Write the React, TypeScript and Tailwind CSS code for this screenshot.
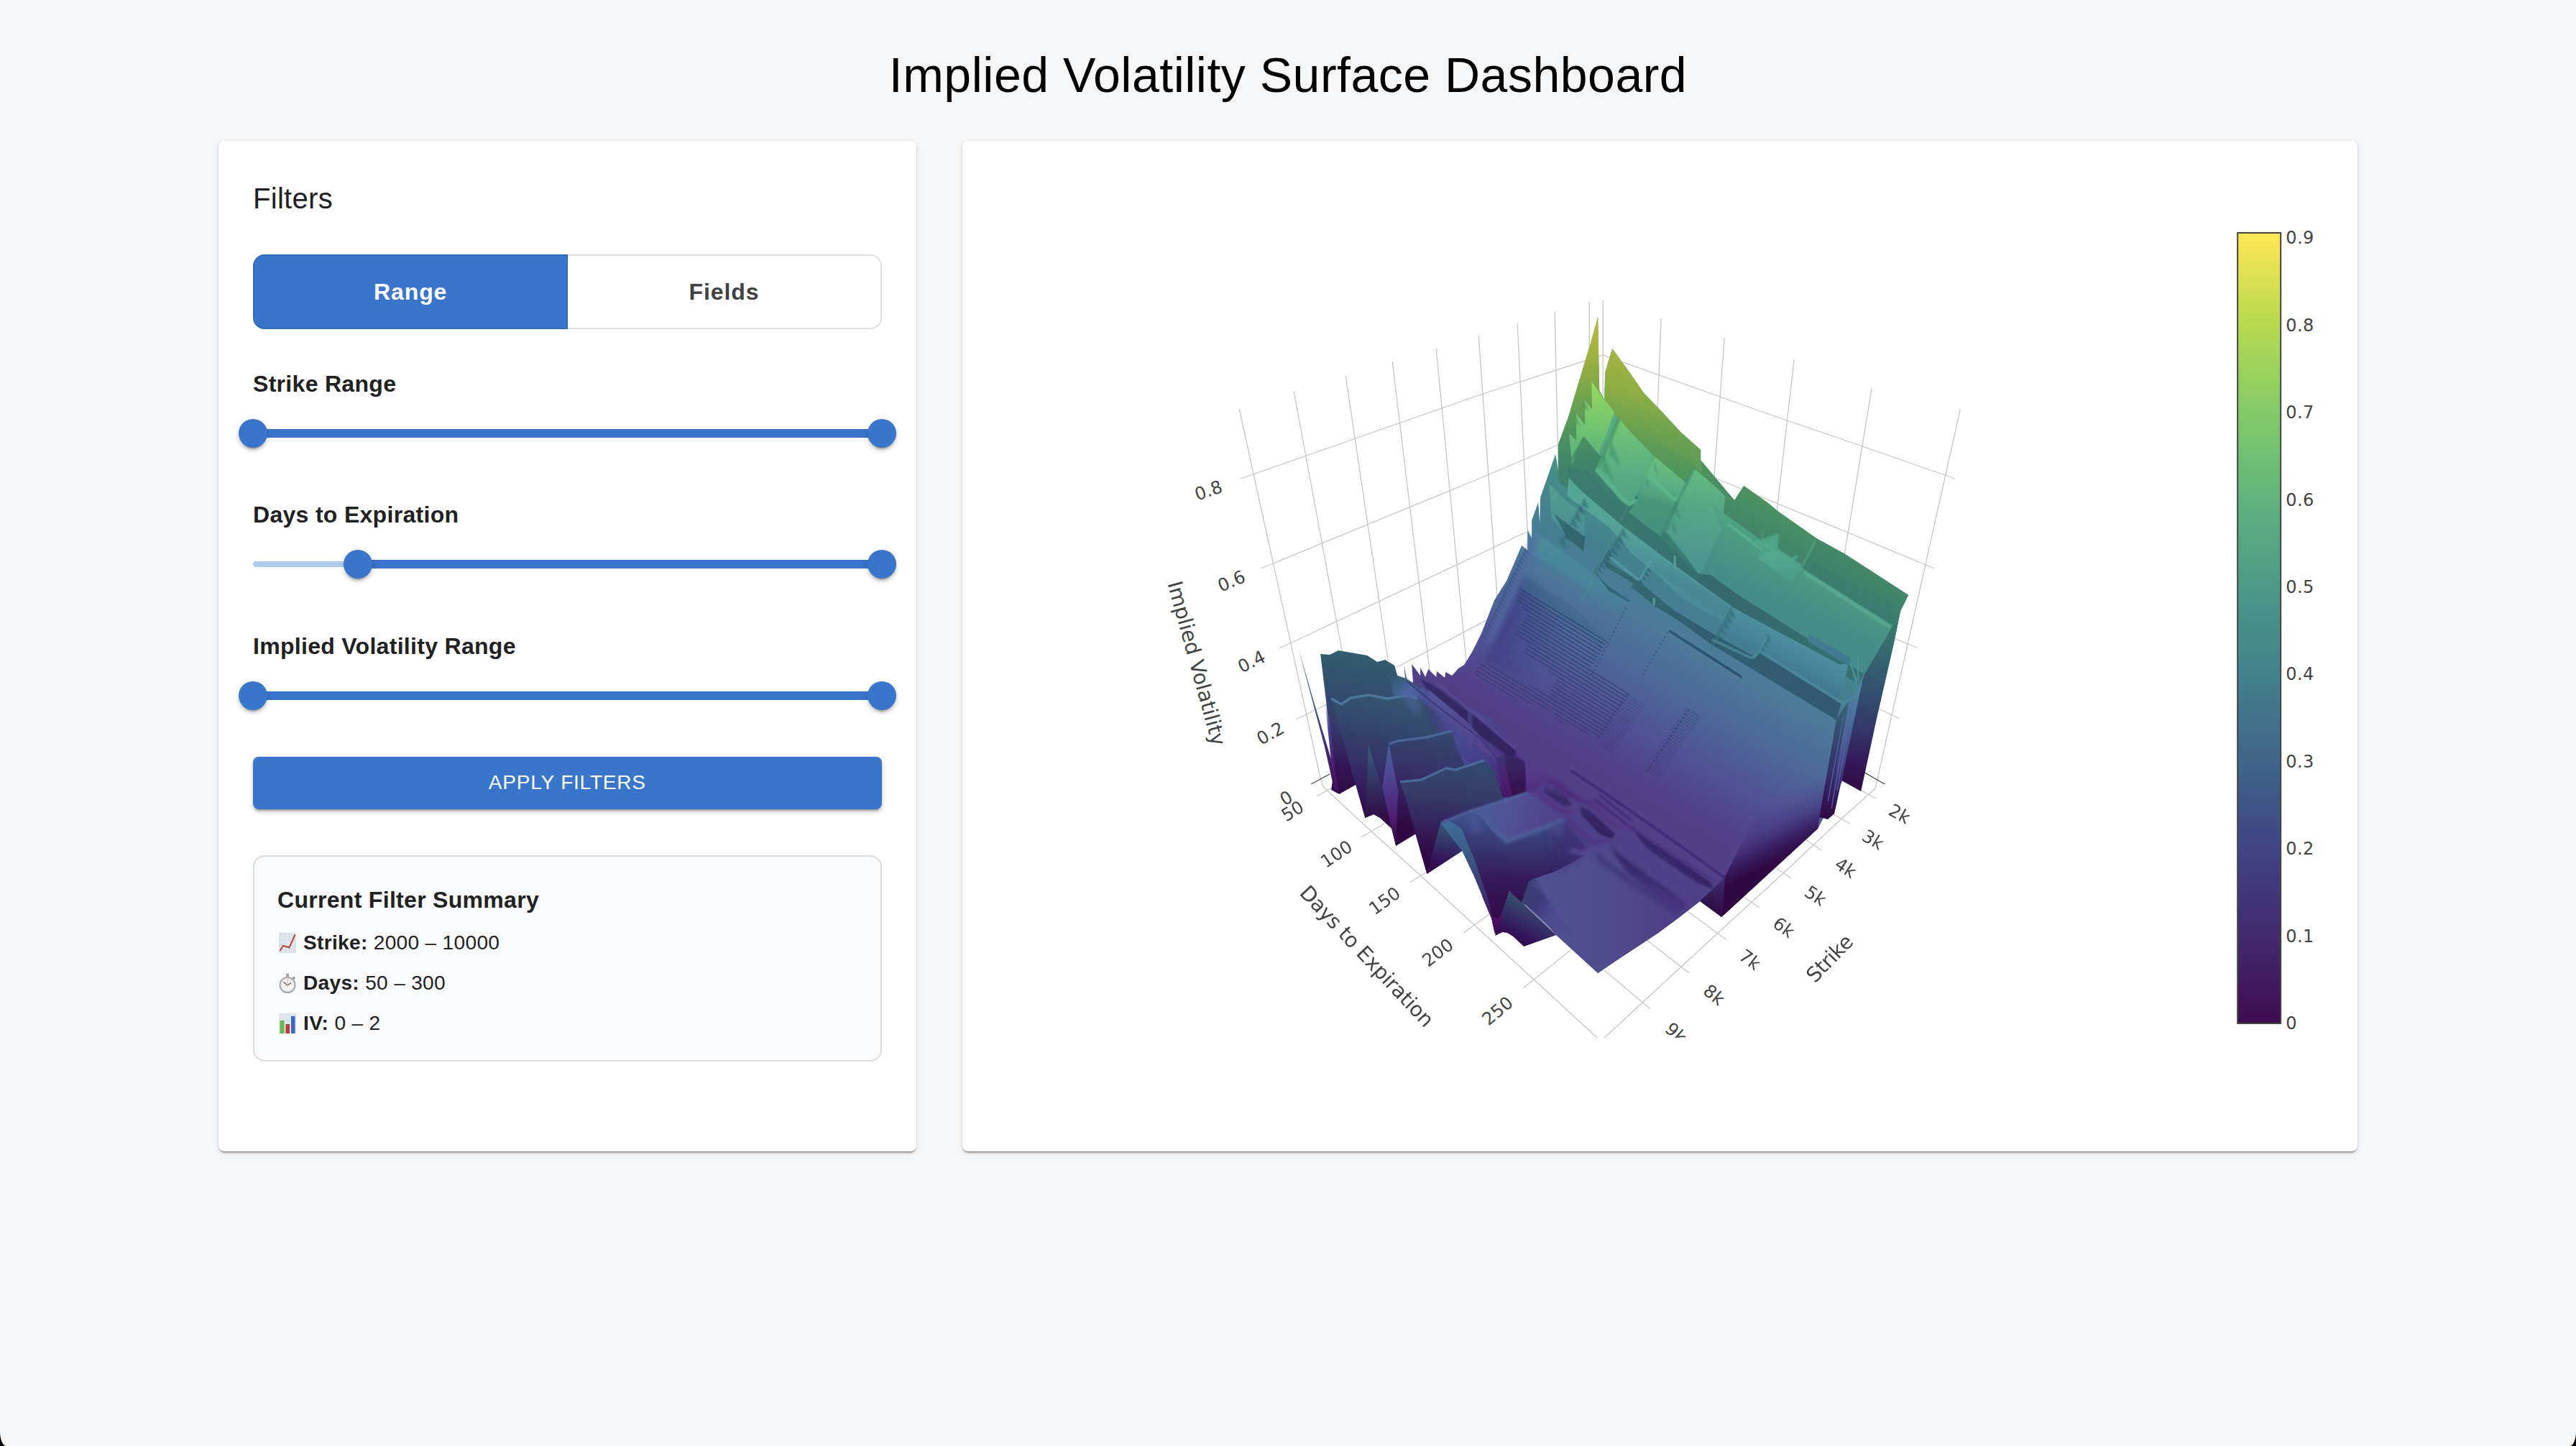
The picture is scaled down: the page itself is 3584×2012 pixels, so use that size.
import React from "react";

type Stop = [number, string, number?];
type Face = { p: string; g: [number, number, number, number]; s: Stop[]; b?: number };

const OUTLINE =
  "2223,441 2225,543 2232,556 2233,518 2243,485 2267,518 2287,547 2313,574 2338,601 2366,626 2366,657 2413,696 2426,676 2460,700 2473,711 2527,749 2567,771 2655,828 2644,850 2635,894 2613,990 2529,1153 2395,1276 2365,1254 2338,1275 2307,1298 2248,1337 2223,1354 2165,1301 2120,1250 2063,1200 2000,1100 1975,1000 1955,944 1953,925 1957,945 1966,952 1964,924 1976,940 1976,929 1983,942 1987,931 1998,942 1999,934 2010,943 2011,935 2020,940 2029,930 2037,925 2048,907 2061,881 2079,835 2096,808 2117,759 2125,766 2125,737 2131,749 2131,724 2140,699 2142,727 2143,692 2164,632 2168,655 2168,618 2182,580 2193,543 2203,510 2213,477";

/* Main sheet shading, running from the near wing up to the low strikes. */
const SHEET: Stop[] = [
  [0, "#4f428a"], [0.08, "#523f86"], [0.2, "#534189"], [0.3, "#504f92"], [0.38, "#4f5c97"],
  [0.48, "#4d6b99"], [0.6, "#4c7b9c"], [0.7, "#457f90"], [0.8, "#458a8a"], [0.9, "#4a9a86"], [1, "#57ae82"],
];

const FACES: Face[] = [
  { p: OUTLINE, g: [2200, 1156, 2450, 723], s: SHEET },
  // far ridge, first spike
  { p: "2223,441 2225,543 2232,556 2246,573 2237,598 2224,632 2255,660 2300,720 2366,800 2300,770 2240,730 2168,670 2168,618 2182,580 2193,543 2203,510 2213,477", g: [2190, 441, 2210, 690],
    s: [[0, "#c4b842"], [0.25, "#9cb03f"], [0.42, "#77a54b"], [0.6, "#54985c"], [0.78, "#428768"], [1, "#3a7c70"]] },
  // far ridge, second crest
  { p: "2243,485 2267,518 2287,547 2313,574 2338,601 2366,626 2366,657 2413,696 2413,740 2347,673 2302,638 2250,582 2232,556 2233,518", g: [2262, 490, 2225, 640],
    s: [[0, "#a9b33f"], [0.35, "#8bad44"], [0.65, "#6aa150"], [1, "#4f965c"]] },
  { p: "2250,560 2302,605 2366,657 2413,700 2413,760 2347,690 2302,640 2250,590", g: [2330, 610, 2310, 680],
    s: [[0, "#5d9c54", 0], [0.6, "#4f965d", 0.9], [1, "#44896a"]] },
  { p: "2366,640 2413,696 2426,676 2460,700 2473,711 2527,749 2508,791 2477,771 2380,702 2356,651 2366,657", g: [2450, 690, 2420, 752],
    s: [[0, "#4d925c"], [0.5, "#458a68"], [1, "#3f7f6e"]] },
  { p: "2527,749 2567,771 2655,828 2644,850 2633,872 2508,791", g: [2590, 782, 2566, 828],
    s: [[0, "#448a66"], [0.5, "#41836b"], [1, "#3b7a70"]] },
  // bright stepped slabs behind the first dark trough
  { p: "2214,530 2232,556 2246,573 2237,598 2224,632 2204,608 2193,627 2187,647 2183,603 2193,613 2193,575 2205,592 2205,557 2215,570", g: [2215, 530, 2205, 640],
    s: [[0, "#97d75f"], [0.4, "#7ecb6b"], [1, "#56b27c"]] },
  { p: "2253,583 2273,606 2302,636 2292,657 2282,678 2268,705 2255,697 2219,655 2230,630 2241,605", g: [2262, 585, 2250, 705],
    s: [[0, "#78c573"], [0.45, "#5cb480"], [1, "#4c9f85"]] },
  { p: "2303,636 2347,673 2337,696 2327,718 2310,747 2266,713 2280,690 2291,659", g: [2318, 640, 2295, 740],
    s: [[0, "#6cc07c"], [0.4, "#55ab84"], [0.6, "#489679"], [1, "#46907f"]] },
  { p: "2356,651 2382,673 2400,690 2395,740 2380,795 2363,798 2320,740 2330,715 2341,680", g: [2365, 655, 2345, 795],
    s: [[0, "#62ba7e"], [0.4, "#52a687"], [1, "#499391"]] },
  { p: "2380,701 2477,771 2508,791 2633,870 2593,938 2417,827 2366,798 2395,735", g: [2450, 735, 2410, 820],
    s: [[0, "#4ea683"], [0.35, "#4a9a82"], [1, "#458b8a"]] },
  // teal slabs
  { p: "2183,660 2205,687 2259,733 2328,785 2410,842 2397,863 2370,850 2340,832 2300,795 2270,770 2240,735 2200,705 2180,690", g: [2300, 745, 2275, 800],
    s: [[0, "#54a596"], [0.6, "#4f959b"], [1, "#4b8a99"]] },
  { p: "2155,673 2182,700 2205,715 2203,767 2180,745 2158,720", g: [2180, 680, 2170, 750], s: [[0, "#519f8d"], [1, "#4b8898"]] },
  { p: "2137,740 2147,748 2205,790 2270,840 2240,850 2180,800 2130,770", g: [2200, 760, 2180, 830], s: [[0, "#4b8f9b"], [1, "#4a7b9b"]], b: 2 },
  // dark troughs
  { p: "2183,650 2212,656 2240,690 2266,713 2310,747 2361,798 2380,800 2417,827 2593,938 2587,953 2410,844 2380,823 2328,785 2258,732 2200,683 2178,660", g: [2180, 650, 2590, 945],
    s: [[0, "#3d7d6f"], [0.3, "#39756e"], [0.55, "#35696f"], [1, "#37706f"]] },
  { p: "2263,745 2330,790 2408,846 2400,862 2330,815 2262,760", g: [2300, 765, 2290, 800], s: [[0, "#509a98"], [1, "#4a8896"]] },
  { p: "2587,953 2584,902 2584,960 2573,922 2560,925 2410,845 2397,864 2387,884 2393,880 2560,975 2573,918", g: [2500, 890, 2480, 930],
    s: [[0, "#4f8fa0"], [1, "#427a93"]] },
  { p: "2162,715 2205,747 2203,767 2180,748", g: [2162, 715, 2203, 767], s: [[0, "#36706e"], [1, "#33616f"]] },
  { p: "2235,781 2280,808 2300,826 2330,850 2393,888 2387,884 2440,913 2447,908 2561,979 2555,1002 2380,896 2333,862 2300,842 2277,822 2273,812 2232,788", g: [2235, 781, 2560, 990],
    s: [[0, "#356b70"], [0.4, "#315f70"], [1, "#325a72"]] },
  { p: "2323,876 2423,940 2424,945 2321,879", g: [2323, 876, 2423, 945], s: [[0, "#2f5674"], [1, "#2d5270"]] },
  { p: "2223,802 2237,815 2268,836 2266,838 2238,822", g: [2223, 802, 2268, 836], s: [[0, "#31616f"], [1, "#35697f"]] },
  { p: "2516,882 2525,887 2523,886 2574,915 2573,927 2516,893", g: [2516, 882, 2570, 920], s: [[0, "#447e93"], [1, "#40788f"]] },
  { p: "2452,733 2452,750 2475,742 2473,763 2508,787 2492,809 2447,778", g: [2470, 740, 2480, 812], s: [[0, "#4ca283"], [0.5, "#52a78e"], [1, "#489b88"]], b: 1 },
  // low-strike end wall
  { p: "2655,828 2644,850 2635,894 2613,990 2589,1101 2562,1086 2583,975 2593,940 2633,871", g: [2630, 850, 2590, 1100],
    s: [[0, "#3d806e"], [0.22, "#356a70"], [0.45, "#33506f"], [0.65, "#343a6b"], [0.85, "#35195a"], [1, "#310a42"]] },
  { p: "2585,955 2593,938 2562,1086 2552,1132 2543,1140 2533,1135 2555,1001 2573,973", g: [2575, 955, 2540, 1135],
    s: [[0, "#4d87a0"], [0.3, "#4a6898"], [0.6, "#454387"], [0.85, "#35195a"], [1, "#310a42"]] },
  { p: "2573,973 2560,993 2555,1001 2531,1137 2543,1140 2558,1050", g: [2568, 975, 2540, 1135],
    s: [[0, "#356a78"], [0.3, "#334a6f"], [0.6, "#35336b"], [0.85, "#34175a"], [1, "#310a42"]] },
  // lower fringe
  { p: "2555,1001 2531,1137 2529,1153 2395,1276 2399,1221 2470,1080", g: [2445, 1125, 2480, 1194],
    s: [[0, "#4b4a8d", 0], [0.4, "#45347c", 0.5], [0.75, "#361a5c", 0.92], [1, "#300944"]] },
  { p: "2400,1221 2395,1276 2365,1254", g: [2398, 1221, 2390, 1270], s: [[0, "#3d2f70"], [1, "#300a44"]] },
  // near wing plate
  { p: "2127,1227 2136,1222 2165,1212 2207,1188 2240,1178 2300,1220 2365,1254 2338,1275 2307,1298 2248,1337 2223,1354 2165,1301", g: [2150, 1230, 2330, 1230],
    s: [[0, "#4f508f"], [0.5, "#504c8d"], [1, "#513f87"]] },
  { p: "2238,1178 2258,1192 2341,1253 2346,1262 2338,1270 2310,1250 2265,1215", g: [2300, 1210, 2285, 1240], s: [[0, "#35255e"], [0.55, "#3e2f74"], [1, "#523788"]], b: 2 },
  { p: "2272,1153 2310,1180 2379,1227 2384,1238 2360,1228 2290,1180", g: [2330, 1185, 2315, 1205], s: [[0, "#33225c"], [0.7, "#3a2b6c"], [1, "#4e3a86"]], b: 1 },
  { p: "2198,1122 2212,1128 2247,1160 2242,1167 2225,1160 2200,1134", g: [2220, 1135, 2212, 1155], s: [[0, "#392b68"], [1, "#33205c"]], b: 1 },
  { p: "2148,1094 2158,1090 2182,1112 2187,1121 2175,1122 2148,1102", g: [2165, 1095, 2158, 1120], s: [[0, "#4a3f85"], [0.5, "#382a66"], [1, "#40306f"]], b: 1 },
  // strip of folds beside the front walls
  { p: "1966,952 2075,1000 2109,1047 2121,1060 2125,1103 2081,1112 2064,1057 2020,1017 1975,972", g: [1980, 960, 2110, 1100],
    s: [[0, "#4d5093"], [0.45, "#4c4a90"], [0.75, "#4d3585"], [1, "#3b1358"]] },
  { p: "1976,944 2000,957 2060,1003 2109,1045 2104,1056 2060,1025 1998,970 1984,958", g: [1980, 950, 2105, 1050], s: [[0, "#362c66"], [1, "#35245f"]], b: 1 },
  { p: "1988,960 2040,1003 2081,1050 2082,1062 2030,1015 1985,974", g: [1988, 960, 2080, 1060], s: [[0, "#51559a"], [1, "#543f88"]] },
  { p: "2092,1048 2121,1059 2123,1101 2104,1112 2094,1100", g: [2105, 1050, 2112, 1108], s: [[0, "#392b66"], [1, "#350f4d"]], b: 1 },
  { p: "2081,1055 2092,1105 2099,1112 2104,1112 2092,1050", g: [2088, 1055, 2098, 1110], s: [[0, "#3d3273"], [0.5, "#4a2270"], [1, "#4b1562"]] },
  { p: "2123,1057 2200,1110 2180,1110 2160,1092 2146,1091 2136,1101 2123,1103", g: [2135, 1060, 2145, 1105], s: [[0, "#543f88"], [1, "#502e80"]], b: 1 },
  // front walls, far to near
  { p: "1806,901 1830,984 1856,1070 1868,1098 1856,1098 1843,1040", g: [1810, 905, 1856, 1095], s: [[0, "#3f7388"], [0.35, "#3e5c92"], [0.7, "#3f2c77"], [1, "#430f57"]] },
  { p: "1837,910 1850,911 1862,905 1902,912 1916,921 1927,918 1940,926 1944,940 1955,944 1975,955 1975,1010 1915,1100 1886,1092 1863,1105 1852,1099 1856,1070", g: [1890, 905, 1870, 1105],
    s: [[0, "#335f6f"], [0.3, "#334d6e"], [0.55, "#35386a"], [0.78, "#35185a"], [1, "#300a44"]] },
  { p: "1843,975 1850,1000 1857,1070 1863,1104 1856,1098", g: [1850, 975, 1860, 1100], s: [[0, "#48408c", 0], [0.3, "#4d3f92"], [0.8, "#481b6a"], [1, "#430f57"]] },
  { p: "1934,940 1957,944 1966,953 1985,968 1990,990 1960,975 1938,967", g: [1940, 945, 1975, 980], s: [[0, "#365a78"], [0.5, "#4a68a0"], [1, "#4b4f94"]], b: 1 },
  { p: "1852,972 1866,980 1879,970 1904,966 1930,971 1957,967 1975,972 1995,990 2020,1017 2050,1060 2010,1080 1970,1160 1942,1177 1936,1153 1920,1138 1911,1133 1899,1138 1886,1092", g: [1925, 965, 1890, 1140],
    s: [[0, "#34566f"], [0.3, "#33456d"], [0.55, "#353169"], [0.8, "#34175a"], [1, "#300944"]] },
  { p: "1957,968 1975,972 1997,992 2020,1017 2050,1060 2035,1068 2005,1020 1975,1000", g: [1985, 1010, 2015, 1000], s: [[0, "#35386b", 0], [0.5, "#3f4280", 0.9], [1, "#4a4a92"]], b: 2 },
  { p: "1904,1037 1925,1105 1937,1153 1920,1138 1911,1133 1899,1138", g: [1906, 1037, 1903, 1138], s: [[0, "#356374"], [0.4, "#353c6b"], [1, "#310b46"]] },
  { p: "1932,1034 1940,1060 1945,1100 1942,1177 1936,1153 1923,1096", g: [1932, 1034, 1938, 1170], s: [[0, "#486096"], [0.35, "#4d4590"], [0.75, "#4d1f72"], [1, "#3a0b4c"]] },
  { p: "1932,1034 1943,1031 1984,1026 2020,1018 2028,1040 2039,1070 2010,1110 1970,1150 1942,1177 1945,1100", g: [1985, 1026, 1968, 1150],
    s: [[0, "#34456e"], [0.4, "#363068"], [0.75, "#36185a"], [1, "#300944"]] },
  { p: "2020,1017 2030,1026 2081,1058 2095,1110 2064,1057 2044,1062 2028,1045", g: [2030, 1020, 2080, 1100], s: [[0, "#484a90"], [0.5, "#44408a"], [1, "#4b2277"]], b: 1 },
  { p: "1948,1088 1977,1085 2012,1070 2025,1072 2065,1058 2078,1072 2092,1112 2105,1125 2034,1184 1985,1216 1969,1160 1958,1120", g: [2010, 1068, 2000, 1195],
    s: [[0, "#34486e"], [0.3, "#353b6a"], [0.6, "#35255f"], [0.85, "#340f4d"], [1, "#300944"]] },
  { p: "2004,1145 2018,1150 2034,1184 1985,1216", g: [2008, 1145, 2000, 1210], s: [[0, "#365b78"], [0.4, "#35366a"], [0.8, "#34135a"], [1, "#300944"]] },
  { p: "2004,1145 2042,1129 2060,1126 2096,1172 2156,1148 2175,1145 2202,1172 2205,1190 2165,1212 2136,1222 2127,1227 2116,1262 2100,1240 2080,1300 2075,1278 2063,1250 2051,1210 2018,1155", g: [2080, 1140, 2075, 1280],
    s: [[0, "#3b4f86"], [0.3, "#373470"], [0.6, "#35195a"], [1, "#330a48"]] },
  { p: "2018,1143 2033,1153 2051,1195 2070,1250 2078,1282 2080,1302 2075,1278 2051,1220 2034,1184 2004,1145", g: [2015, 1145, 2075, 1290], s: [[0, "#3e6e94"], [0.4, "#3a5584"], [0.75, "#3a2c6c"], [1, "#430f5c"]] },
  { p: "2130,1145 2175,1140 2207,1180 2190,1200 2165,1212 2150,1180", g: [2145, 1170, 2205, 1160], s: [[0, "#352060", 0], [1, "#45307a"]], b: 3 },
  { p: "2042,1129 2080,1117 2125,1103 2140,1112 2153,1125 2180,1135 2170,1143 2156,1149 2120,1162 2096,1172 2075,1155 2060,1135", g: [2070, 1120, 2160, 1140],
    s: [[0, "#4c5a98"], [0.35, "#505294"], [1, "#52428a"]] },
  { p: "2127,1227 2136,1222 2150,1245 2180,1290 2165,1300 2122,1260 2116,1258", g: [2125, 1235, 2165, 1265], s: [[0, "#38406f"], [0.5, "#3f3a7c"], [1, "#4f4b8f"]], b: 1 },
  { p: "2100,1240 2130,1268 2165,1301 2120,1317 2105,1303 2097,1298 2090,1297 2080,1302 2086,1278", g: [2130, 1262, 2105, 1312], s: [[0, "#354a6d"], [0.35, "#353066"], [0.75, "#34135a"], [1, "#300a44"]] },
  { p: "2078,1275 2084,1278 2090,1272 2082,1300 2078,1290", g: [2078, 1275, 2084, 1300], s: [[0, "#4d1068"], [1, "#3f0a50"]] },
];

type Crease = { d: string; c: string; w: number; o?: number; b?: number };
const CREASES: Crease[] = [
  { d: "M1852 972L1866 980L1879 971L1904 967L1930 972L1957 968L1972 972", c: "#4a7699", w: 3.5 },
  { d: "M1933 1035L1944 1031L1984 1026L2020 1017", c: "#47669b", w: 3.5 },
  { d: "M1948 1088L1977 1085L2012 1069L2025 1071L2065 1058", c: "#47699a", w: 3.5 },
  { d: "M2005 1145L2042 1130L2070 1121L2125 1103", c: "#4c5f9a", w: 4, b: 1 },
  { d: "M2060 1130L2080 1155L2096 1171L2156 1149L2180 1139", c: "#4c5f96", w: 6, b: 2 },
  { d: "M2045 1132L2058 1158", c: "#505596", w: 14, b: 5, o: 0.8 },
  { d: "M2163 1146L2170 1162", c: "#4e4a90", w: 14, b: 5, o: 0.8 },
  { d: "M1955 960L1972 990", c: "#5360a0", w: 12, b: 5, o: 0.7 },
  { d: "M2044 990L2046 1040", c: "#524b94", w: 7, b: 3, o: 0.8 },
  { d: "M2132 1228L2150 1240L2170 1266L2180 1286", c: "#505496", w: 7, b: 3, o: 0.6 },
  { d: "M2184 1183L2207 1188L2245 1170", c: "#50498f", w: 7, b: 2 },
  { d: "M2176 1137Q2195 1142 2215 1170", c: "#4d438c", w: 9, b: 2 },
  { d: "M2220 1190L2262 1222L2335 1270", c: "#413478", w: 7, b: 3, o: 0.9 },
  { d: "M2221 653L2262 698Q2268 704 2276 695", c: "#5ab388", w: 5, b: 1 },
  { d: "M2293 661L2327 693Q2334 698 2340 688", c: "#5cb887", w: 5, b: 1 },
  { d: "M2404 729L2450 764", c: "#59b18c", w: 4, b: 1 },
  { d: "M2443 752L2488 779Q2493 781 2500 773", c: "#54a88e", w: 4, b: 1 },
  { d: "M2510 797L2630 873", c: "#58a990", w: 5, b: 1 },
  { d: "M2526 752L2508 787", c: "#4f9d78", w: 3, b: 1 },
  { d: "M2182 647L2204 608", c: "#448b66", w: 3, o: 0.8 },
  { d: "M2310 612L2256 722L2202 835", c: "#53a37c", w: 1.5, o: 0.4 },
  { d: "M2357 651L2311 745", c: "#3f836e", w: 3, o: 0.7, b: 1 },
  { d: "M2252 584L2223 651", c: "#3f8a60", w: 5, o: 0.6, b: 1 },
  { d: "M2240 775L2278 806Q2281 808 2286 798L2297 780", c: "#56a0a5", w: 3, b: 1 },
  { d: "M2382 890L2435 915Q2441 916 2446 908L2458 886", c: "#4f929d", w: 3, b: 1 },
  { d: "M2447 905L2565 979L2574 972", c: "#4f8aa0", w: 3, b: 1 },
  { d: "M2410 842L2380 905", c: "#3c7680", w: 2, o: 0.8 },
  { d: "M2330 773L2330 788M2301 832L2301 842", c: "#559f9f", w: 3 },
  { d: "M2572 985L2548 1125M2577 975L2556 1100M2565 995L2543 1115", c: "#5467a3", w: 1.5, o: 0.8 },
  { d: "M2185 1072L2232 1103L2345 1182L2400 1222", c: "#413079", w: 4 },
  { d: "M2260 1145L2300 1172L2384 1226", c: "#463580", w: 3, b: 1 },
  { d: "M2110 1050L2190 1105L2215 1117", c: "#5a3a8a", w: 3, b: 1 },
  { d: "M2162 1086L2195 1113L2216 1118", c: "#4a2f7c", w: 4, b: 2 },
  { d: "M2140 1103L2170 1128L2190 1131", c: "#552f82", w: 4, b: 2 },
  { d: "M2178 1137L2215 1172L2240 1170", c: "#53307f", w: 4, b: 2 },
  { d: "M2215 1118L2250 1152L2270 1150", c: "#57317f", w: 4, b: 2 },
  { d: "M2218 1112L2262 1146M2225 1106L2270 1142", c: "#43297a", w: 2.5, b: 1 },
  { d: "M1957 948L2000 983L2060 1028L2082 1055", c: "#3f3a7c", w: 2 },
  { d: "M1998 950L2060 1000L2108 1042", c: "#5d4a92", w: 2 },
  { d: "M2071 893L2118 795L2138 745", c: "#566ba0", w: 11, b: 4, o: 0.65 },
];

const range = (n: number) => Array.from({ length: n }, (_, i) => i);

function Axes() {
  return (
    <g stroke="#c6c6c6" strokeWidth="1.3" fill="none">
      <path d="M1724 569L1837 1083L1841 1095M1800 545L1867 906M1872 523L1931 919M1937 503L1989 934M1998 485L2040 923M2057 467L2083 833M2111 450L2125 739M2163 434L2168 655M2211 420V500M2230 418V560" />
      <path d="M2311 443L2306 567M2399 470L2384 673M2496 500L2472 711M2604 540L2566 772M2727 570L2609 1097" />
      <path d="M1726 666L2060 549L2230 494L2460 576L2591 621L2720 666" />
      <path d="M1754 791L2060 665L2168 619M2366 657L2571 741L2691 791" />
      <path d="M1780 902L2124 740M2630 886L2666 901M1803 1001L1846 980M1942 929L2070 862M2613 986L2643 1000" />
      <path d="M1841 1095L1908 1157L1976 1218L2051 1287L2134 1363L2222 1444M1832 1108L1856 1094M1893 1165L1926 1146M1961 1228L1984 1214M2036 1298L2072 1272M2119 1375L2185 1322" />
      <path d="M2609 1097L2562 1139L2482 1214L2389 1299L2285 1395L2232 1444M2610 1111L2588 1099M2574 1146L2549 1132M2534 1183L2513 1169M2492 1222L2470 1207M2448 1263L2424 1247M2401 1307L2348 1268M2350 1354L2290 1307M2296 1404L2232 1350" />
      <path d="M1824 1091L1850 1077M2594 1075L2622 1091" stroke="#444" />
    </g>
  );
}

const TICKS: [string, number, number, number][] = [
  ["0.8", 1681, 682, -19], ["0.6", 1713, 808, -23], ["0.4", 1741, 920, -26], ["0.2", 1767, 1020, -29], ["0", 1789, 1110, -30],
  ["50", 1798, 1128, -31], ["100", 1859, 1188, -34], ["150", 1926, 1253, -36], ["200", 2000, 1325, -37], ["250", 2083, 1406, -40],
  ["2k", 2643, 1132, 29], ["3k", 2606, 1168, 31], ["4k", 2568, 1207, 33], ["5k", 2526, 1246, 34], ["6k", 2482, 1290, 36],
  ["7k", 2435, 1335, 37], ["8k", 2385, 1384, 39], ["9k", 2332, 1437, 41],
];

const TITLES: [string, number, number, number, number][] = [
  ["Implied Volatility", 1664, 923, 74.6, 236],
  ["Days to Expiration", 1901, 1331, 46.8, 257],
  ["Strike", 2546, 1334, -46, 79],
];

const BAR: [number, string][] = [
  [0, "#fbe955"], [0.01, "#f9e653"], [0.117, "#b5d94f"], [0.227, "#83cb68"], [0.338, "#5fb37c"], [0.448, "#4b9a88"],
  [0.558, "#43818b"], [0.669, "#3f658b"], [0.78, "#404484"], [0.89, "#432a6f"], [1, "#3f0c52"],
];

function SurfacePlot() {
  return (
    <svg className="block w-full flex-1" viewBox="1339 196 1941 1406" fontFamily="Verdana, 'DejaVu Sans', sans-serif" fill="#444">
      <defs>
        {FACES.map((f, i) => (
          <linearGradient key={i} id={`face${i}`} gradientUnits="userSpaceOnUse" x1={f.g[0]} y1={f.g[1]} x2={f.g[2]} y2={f.g[3]}>
            {f.s.map(([o, c, a], k) => (
              <stop key={k} offset={o} stopColor={c} stopOpacity={a ?? 1} />
            ))}
          </linearGradient>
        ))}
        <linearGradient id="bar" x1="0" y1="0" x2="0" y2="1">
          {BAR.map(([o, c]) => (
            <stop key={o} offset={o} stopColor={c} />
          ))}
        </linearGradient>
        {[1, 2, 3, 4, 5].map((b) => (
          <filter key={b} id={`soft${b}`} x="-100%" y="-50%" width="300%" height="200%">
            <feGaussianBlur stdDeviation={b} />
          </filter>
        ))}
        <clipPath id="scene">
          <rect x="1339" y="300" width="1700" height="1144" />
        </clipPath>
        <clipPath id="hatchA">
          <path d="M2107 830L2118 818L2236 893L2212 930L2267 966L2225 1028L2170 1005L2160 990L2092 965L2050 940L2062 920L2155 968L2167 942L2120 910L2125 895L2108 882L2125 855Z" />
        </clipPath>
        <linearGradient id="shade" gradientUnits="userSpaceOnUse" x1="2100" y1="860" x2="2200" y2="900">
          <stop offset="0" stopColor="#3f3f86" stopOpacity="0.75" />
          <stop offset="1" stopColor="#3f5a90" stopOpacity="0" />
        </linearGradient>
      </defs>
      <Axes />
      <path d={`M${FACES[0].p.split(" ").join("L")}Z`} fill="url(#face0)" />
      <path d="M2118 800L2236 890L2155 972L2064 920L2100 840Z" fill="url(#shade)" filter="url(#soft5)" />
      <path d="M2120 800L2190 845L2236 890L2225 898L2117 820Z" fill="#3d6a8a" opacity="0.6" />
      <g stroke="#343f6f" strokeWidth="1.5" opacity="0.8" clipPath="url(#hatchA)">
        {range(50).map((i) => (
          <path key={i} d={`M${2040 - i} ${750 + i * 5.4}l250 152`} />
        ))}
      </g>
      <g stroke="#3a3a78" strokeWidth="2" opacity="0.3" strokeLinecap="round">
        {range(26).map((i) => (
          <path key={i} d={`M${2345 - i * 2.3} ${985 + i * 3.4}l20 13`} />
        ))}
        {range(20).map((i) => (
          <path key={i} d={`M${2262 - i * 2.3} ${966 + i * 3.4}l26 16`} />
        ))}
      </g>
      <g stroke="#2f3668" strokeWidth="2" strokeDasharray="2 4" opacity="0.8">
        <path d="M2349 988L2291 1074" />
        <path d="M2262 846L2213 942M2320 880L2284 942" opacity="0.7" />
      </g>
      <g fill="#2f5a6c" opacity="0.5">
        {range(9).map((i) => (
          <path key={i} d={`M${2238 - i * 3.6} ${763 + i * 5.6}l-3 8l9 5z`} />
        ))}
        {range(7).map((i) => (
          <path key={i} d={`M${2296 - i * 4} ${780 + i * 5}l-3 8l9 5z`} />
        ))}
      </g>
      {FACES.slice(1).map((f, i) => (
        <polygon key={i} points={f.p} fill={`url(#face${i + 1})`} filter={f.b ? `url(#soft${f.b})` : undefined} />
      ))}
      <g fill="#37806c" opacity="0.4" filter="url(#soft1)">
        {[[2204, 557, 15, 16], [2193, 578, 12, 16], [2241, 610, 26, 38], [2231, 632, 28, 36], [2290, 662, 10, 18], [2331, 700, 18, 24], [2327, 722, 16, 24], [2320, 743, 18, 26], [2302, 640, 10, 22]].map(([x, y, w, h], i) => (
          <path key={i} d={`M${x} ${y}l${w * 0.5} ${h}l-${w * 0.6} -${h * 0.4}z`} />
        ))}
      </g>
      <g fill="#2f6470" opacity="0.6" filter="url(#soft1)">
        {range(6).map((i) => (
          <path key={i} d={`M${2409 - i * 4.6} ${847 + i * 7.2}l-3 9l9 6z`} />
        ))}
        {range(4).map((i) => (
          <path key={i} d={`M${2459 - i * 4} ${881 + i * 7}l-3 9l7 5z`} />
        ))}
        {range(7).map((i) => (
          <path key={i} d={`M${2204 - i * 5} ${692 + i * 9}l-4 10l10 7z`} />
        ))}
        {range(6).map((i) => (
          <path key={i} d={`M${2258 - i * 4.6} ${734 + i * 8}l-4 9l11 8z`} />
        ))}
      </g>
      <g fill="#333f78" opacity="0.45">
        {range(24).map((i) => (
          <path key={i} d={`M${2122 - i * 2.5} ${762 + i * 5.2}l-2 5l10 7z`} />
        ))}
      </g>
      {CREASES.map((c, i) => (
        <path key={i} d={c.d} fill="none" stroke={c.c} strokeWidth={c.w} opacity={c.o ?? 1} strokeLinejoin="round" filter={c.b ? `url(#soft${c.b})` : undefined} />
      ))}
      <g clipPath="url(#scene)" textAnchor="middle">
        {TICKS.map(([t, x, y, r]) => (
          <text key={t} fontSize="24.500" transform={`translate(${x} ${y}) rotate(${r})`} y="9">
            {t}
          </text>
        ))}
        {TITLES.map(([t, x, y, r, len]) => (
          <text key={t} fontSize="28.500" transform={`translate(${x} ${y}) rotate(${r})`} y="9" textLength={len}>
            {t}
          </text>
        ))}
      </g>
      <rect x="3113" y="324" width="60" height="1100" fill="url(#bar)" stroke="#444" strokeWidth="2" />
      {range(10).map((i) => (
        <text key={i} x="3180" y={1432 - i * 121.4} fontSize="24" letterSpacing="0.5">
          {i === 0 ? "0" : `0.${i}`}
        </text>
      ))}
    </svg>
  );
}

function RangeSlider({ label, from }: { label: string; from: number }) {
  return (
    <div className="mb-[44.300px]">
      <div className="text-[32px] leading-[56px] font-bold tracking-[0.3px]">{label}</div>
      <div className="relative flex h-[82px] items-center">
        <div className="h-2 w-full rounded-full bg-[#b0caeb]" />
        <div className="absolute right-0 h-3 rounded-full bg-[#3875cb]" style={{ left: `${from}%` }} />
        {[from, 100].map((v) => (
          <div
            key={v}
            className="absolute size-10 -translate-x-1/2 rounded-full bg-[#3875cb] shadow-[0_6px_2px_-4px_rgba(0,0,0,0.2),0_4px_4px_rgba(0,0,0,0.14),0_2px_10px_rgba(0,0,0,0.12)]"
            style={{ left: `${v}%` }}
          />
        ))}
      </div>
    </div>
  );
}

const ICON = "mr-[10px] ml-[2px] h-7 w-6 shrink-0";

function TrendIcon() {
  return (
    <svg viewBox="0 0 24 28" className={ICON}>
      <rect width="24" height="28" fill="#d9e2e8" />
      <path d="M0 7h24M0 14h24M0 21h24M6 0v28M12 0v28M18 0v28" stroke="#e6ecf0" />
      <path d="M1.5 25L6 18L14.500 20.500L22.500 2.500" fill="none" stroke="#c2403b" strokeWidth="2" />
    </svg>
  );
}

function StopwatchIcon() {
  return (
    <svg viewBox="0 0 24 28" className={ICON}>
      <rect x="10" y="0.500" width="4" height="5" rx="1" fill="#a3a6ab" />
      <path d="M19.500 8L22 5.500" stroke="#8d9096" strokeWidth="3" />
      <circle cx="12" cy="16.500" r="10.500" fill="#f6f6f4" stroke="#a3a6ab" strokeWidth="2" />
      <circle cx="12" cy="16.500" r="8" fill="none" stroke="#c6c8cb" strokeDasharray="1 3.190" strokeWidth="1.500" />
      <path d="M12 17L6.500 12.500M12 17L17 13.500" stroke="#4a4a4a" strokeWidth="1.200" />
      <path d="M12 19V8" stroke="#eeb0a4" strokeWidth="1" />
    </svg>
  );
}

function BarsIcon() {
  return (
    <svg viewBox="0 0 24 28" className={ICON}>
      <rect width="24" height="28" fill="#dbe4ea" />
      <path d="M0 7h24M0 14h24M0 21h24" stroke="#e8eef2" />
      <rect x="1.500" y="10" width="6" height="18" fill="#63b94f" />
      <rect x="9.500" y="15" width="5.500" height="13" fill="#bd3c38" />
      <rect x="17" y="4" width="5.500" height="24" fill="#3c68bb" />
    </svg>
  );
}

const SUMMARY: [React.ReactNode, string, string][] = [
  [<TrendIcon />, "Strike:", "2000 – 10000"],
  [<StopwatchIcon />, "Days:", "50 – 300"],
  [<BarsIcon />, "IV:", "0 – 2"],
];

const PAPER = "rounded-lg bg-white shadow-[0_4px_2px_-2px_rgba(0,0,0,0.2),0_2px_2px_rgba(0,0,0,0.14),0_2px_6px_rgba(0,0,0,0.12)]";

export default function App() {
  return (
    <div className="h-[2012px] w-full bg-black font-['Liberation_Sans',Arial,sans-serif] text-[#212121]">
      <div className="h-full bg-[#f4f6f8] pt-[62px] [border-bottom-left-radius:9px_20px] [border-bottom-right-radius:9px_20px]">
        <h1 className="text-center text-[68px] leading-[84px] tracking-[0.5px] text-black">Implied Volatility Surface Dashboard</h1>
        <main className="mx-auto mt-[50px] flex h-[1406px] w-[2976px] gap-16">
          <section className={`${PAPER} w-[970.660px] shrink-0 p-12`}>
            <h2 className="text-[40px] leading-[64px] tracking-[0.3px]">Filters</h2>
            <div className="mt-[46px] mb-12 flex h-[104px] text-[32px] font-bold tracking-[0.9px]">
              <button className="flex-1 rounded-l-2xl border-2 border-[#3069b7] bg-[#3875cb] text-white">Range</button>
              <button className="flex-1 rounded-r-2xl border-2 border-l-0 border-[#e0e0e0] text-[#424242]">Fields</button>
            </div>
            <RangeSlider label="Strike Range" from={0} />
            <RangeSlider label="Days to Expiration" from={16.667} />
            <RangeSlider label="Implied Volatility Range" from={0} />
            <button className="block h-[73px] w-full rounded-lg bg-[#3875cb] text-[28px] tracking-[0.8px] text-white shadow-[0_6px_2px_-4px_rgba(0,0,0,0.2),0_4px_4px_rgba(0,0,0,0.14),0_2px_10px_rgba(0,0,0,0.12)]">
              APPLY FILTERS
            </button>
            <div className="mt-16 rounded-2xl border-2 border-[#dadce0] bg-[#f9fafc] px-8 pt-8 pb-[31px]">
              <div className="mb-3 text-[32px] leading-[56px] font-bold tracking-[0.3px]">Current Filter Summary</div>
              <div className="flex flex-col gap-4 text-[28px] leading-10 tracking-[0.35px]">
                {SUMMARY.map(([icon, name, value]) => (
                  <div key={name} className="flex items-center whitespace-pre">
                    {icon}
                    <b>{name}</b>
                    <span> {value}</span>
                  </div>
                ))}
              </div>
            </div>
          </section>
          <section className={`${PAPER} flex flex-1 flex-col`}>
            <SurfacePlot />
          </section>
        </main>
      </div>
    </div>
  );
}
